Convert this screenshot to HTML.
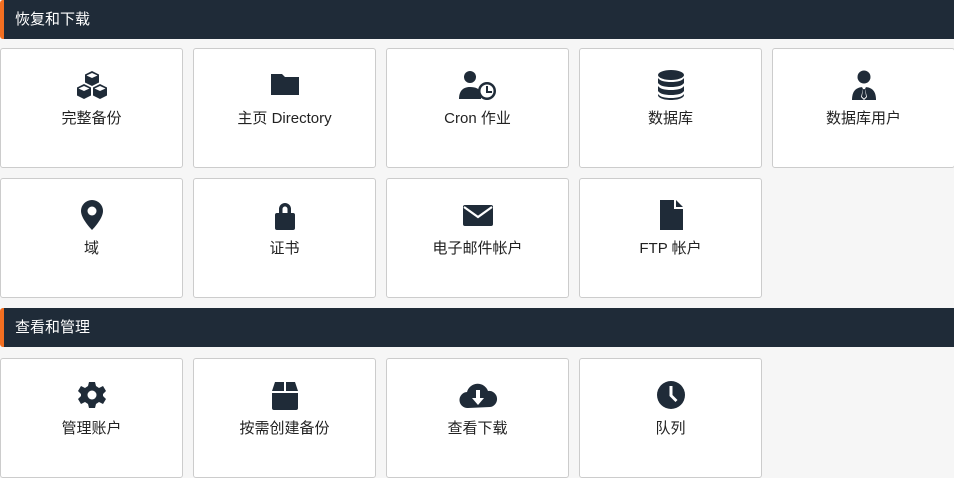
<!DOCTYPE html>
<html><head><meta charset="utf-8"><style>
*{box-sizing:border-box;margin:0;padding:0}
body{width:954px;height:477px;overflow:hidden;background:#f6f6f6;font-family:"Liberation Sans","Noto Sans CJK SC",sans-serif;position:relative}
.h{position:absolute;left:0;width:954px;height:39px;background:#1f2b38;border-left:4px solid #f36f21;border-radius:3px 0 0 3px;color:#fff;font-size:15px;line-height:39px;padding-left:11px}
.c{position:absolute;width:183px;height:120px;background:#fff;border:1px solid #ccc;border-radius:3px;text-align:center;color:#222;font-size:15px}
.c svg{position:absolute;left:50%;top:20px;transform:translateX(-50%);width:32px;height:32px;fill:#1f2b38}
.c span{position:absolute;left:0;right:0;top:58px}
</style></head><body>
<div class="h" style="top:0">恢复和下载</div>
<div class="h" style="top:308px">查看和管理</div>

<div class="c" style="left:0;top:48px"><svg viewBox="0 0 32 32"><g><path d="M16 2l7 3.5v8L16 17l-7-3.5v-8z"/><path d="M10.5 6.5L16 4l5.5 2.5L16 9z" fill="#fff"/></g><g><path d="M8 15l7 3.5v8L8 30l-7-3.5v-8z"/><path d="M2.5 19.5L8 17l5.5 2.5L8 22z" fill="#fff"/></g><g><path d="M24 15l7 3.5v8L24 30l-7-3.5v-8z"/><path d="M18.5 19.5L24 17l5.5 2.5L24 22z" fill="#fff"/></g></svg><span>完整备份</span></div>
<div class="c" style="left:193px;top:48px"><svg viewBox="0 0 32 32"><path d="M2 5h11l3 3h14v18H2z"/></svg><span>主页 Directory</span></div>
<div class="c" style="left:386px;top:48px"><svg viewBox="0 0 40 32" style="width:40px"><circle cx="12" cy="8" r="6"/><path d="M1 30c0-9 5-12 11-12s9 2 11 5v7z"/><circle cx="29" cy="22" r="9"/><circle cx="29" cy="22" r="6.5" fill="#fff"/><path d="M28 17h2v5h4v2h-6z"/></svg><span>Cron 作业</span></div>
<div class="c" style="left:579px;top:48px"><svg viewBox="0 0 32 32"><ellipse cx="16" cy="6" rx="13" ry="5"/><path d="M3 9c2 3 7 4 13 4s11-1 13-4v5c-2 3-7 4-13 4S5 17 3 14z M3 17c2 3 7 4 13 4s11-1 13-4v5c-2 3-7 4-13 4S5 25 3 22z M3 25c2 3 7 4 13 4s11-1 13-4v1c0 3-6 5-13 5S3 29 3 26z"/></svg><span>数据库</span></div>
<div class="c" style="left:772px;top:48px"><svg viewBox="0 0 32 32"><circle cx="16" cy="8" r="6.5"/><path d="M4 31c0-9 4-13 12-13s12 4 12 13z"/><path d="M14 18h4l-1 2 2 8-3 3-3-3 2-8z" fill="#fff"/><path d="M15.2 20h1.6l1.3 7.6-2.1 2-2.1-2z"/></svg><span>数据库用户</span></div>

<div class="c" style="left:0;top:178px"><svg viewBox="0 0 32 32"><path d="M16 1a11 11 0 0 0-11 11c0 8 11 19 11 19s11-11 11-19A11 11 0 0 0 16 1z"/><circle cx="16" cy="12" r="4.5" fill="#fff"/></svg><span>域</span></div>
<div class="c" style="left:193px;top:178px"><svg viewBox="0 0 32 32"><path d="M10 14V10a6 6 0 0 1 12 0v4h-3.5v-4a2.5 2.5 0 0 0-5 0v4z"/><rect x="6" y="14" width="20" height="17" rx="2"/></svg><span>证书</span></div>
<div class="c" style="left:386px;top:178px"><svg viewBox="0 0 32 32"><rect x="1" y="6" width="30" height="21" rx="2"/><path d="M2 8l14 10 14-10" stroke="#fff" stroke-width="2.2" fill="none"/></svg><span>电子邮件帐户</span></div>
<div class="c" style="left:579px;top:178px"><svg viewBox="0 0 32 32"><path d="M5 1h14v9h9v21H5z M21 1l7 7h-7z"/></svg><span>FTP 帐户</span></div>

<div class="c" style="left:0;top:358px"><svg viewBox="0 0 32 32"><path d="M13 3h6l1 4 3 2 4-2 3 5-3 3v2l3 3-3 5-4-2-3 2-1 4h-6l-1-4-3-2-4 2-3-5 3-3v-2l-3-3 3-5 4 2 3-2z"/><circle cx="16" cy="16" r="4.5" fill="#fff"/></svg><span>管理账户</span></div>
<div class="c" style="left:193px;top:358px"><svg viewBox="0 0 32 32"><path d="M6 3h9v9H3z M17 3h9l3 9H17z M3 14h26v15a2 2 0 0 1-2 2H5a2 2 0 0 1-2-2z"/></svg><span>按需创建备份</span></div>
<div class="c" style="left:386px;top:358px"><svg viewBox="0 0 40 32" style="width:40px"><path d="M10 29a8 8 0 0 1-1-16 11 11 0 0 1 21-1 8 8 0 0 1 2 16z"/><path d="M18 11h4v8h4l-6 7-6-7h4z" fill="#fff"/></svg><span>查看下载</span></div>
<div class="c" style="left:579px;top:358px"><svg viewBox="0 0 32 32"><circle cx="16" cy="16" r="14"/><path d="M14.5 7h3v9l5 5-2 2-6-6z" fill="#fff"/></svg><span>队列</span></div>
</body></html>
